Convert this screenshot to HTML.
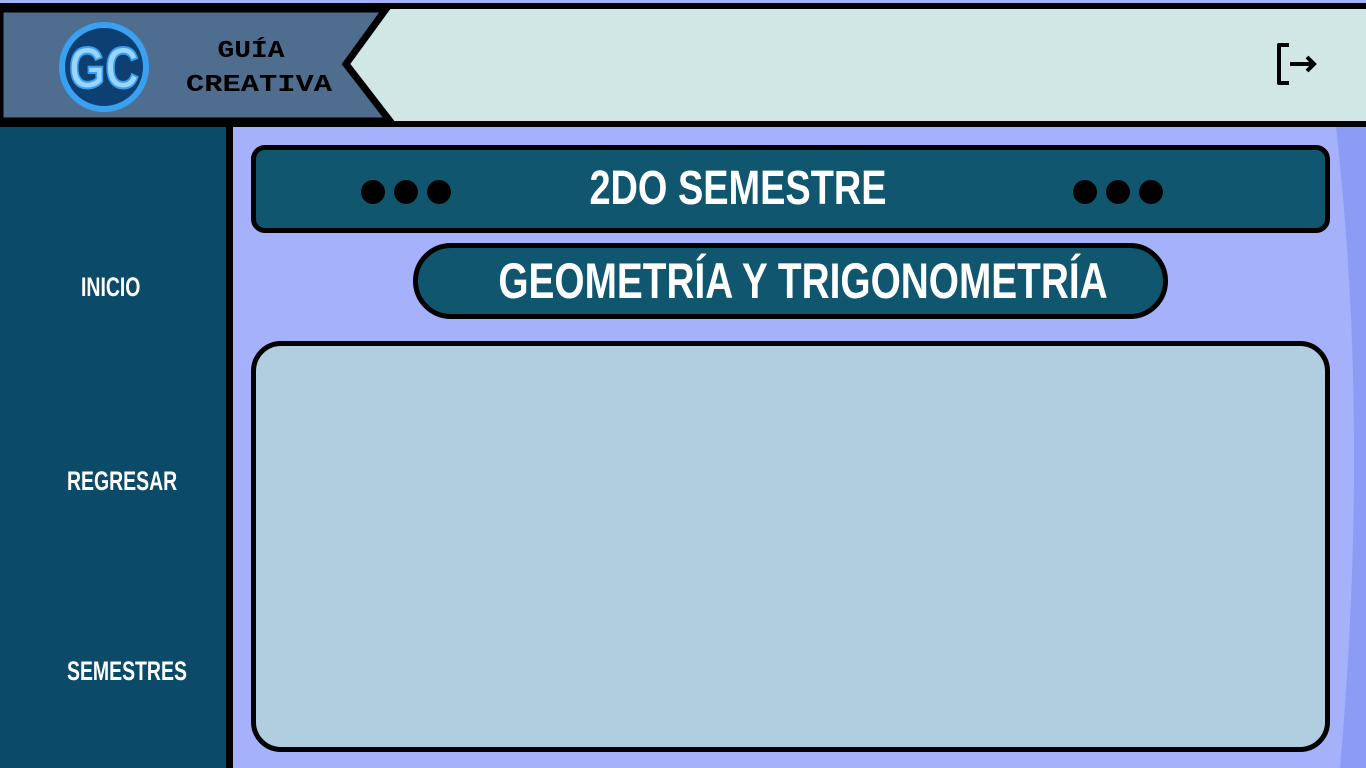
<!DOCTYPE html>
<html><head><meta charset="utf-8"><style>
*{margin:0;padding:0;box-sizing:border-box}
body{width:1366px;height:768px;overflow:hidden;background:#a5b1fa;position:relative;font-family:"Liberation Sans Narrow","Liberation Sans",sans-serif}
.top{position:absolute;left:0;top:0;width:1366px;height:3px;background:#a5b1fa}
.hdr{position:absolute;left:0;top:3px;width:1366px;height:124px;background:#000}
.hdrr{position:absolute;left:0;top:9px;width:1366px;height:112px;background:#d1e7e5}
.side{position:absolute;left:0;top:127px;width:226px;height:641px;background:#0b4a69}
.sideb{position:absolute;left:226px;top:127px;width:7px;height:641px;background:#000}
.nav{position:absolute;color:#fff;font-weight:bold;font-size:27px;transform:scaleX(.72);transform-origin:left;white-space:nowrap}
.bar{position:absolute;background:#10566f;border:5px solid #000;color:#fff;font-weight:bold}
.t{position:absolute;white-space:nowrap}
.dots{position:absolute;top:30px;display:flex;gap:9px}
.dots span{width:24px;height:24px;border-radius:50%;background:#000;display:block}
</style></head><body>
<div class="top"></div>
<div class="hdr"></div>
<div class="hdrr"></div>
<svg style="position:absolute;left:0;top:0" width="420" height="130">
<polygon points="0,9 386,9 346,64 390,121 0,121" fill="#4f6d8f" stroke="#000" stroke-width="7"/>
<circle cx="104" cy="67" r="42" fill="#0e3f73" stroke="#3aa0f0" stroke-width="6"/>
<text x="104" y="88" style="font-family:'Liberation Sans',sans-serif" font-weight="bold" font-size="58" fill="#9ad6ff" stroke="#3aa0f0" stroke-width="2" text-anchor="middle" textLength="70" lengthAdjust="spacingAndGlyphs">GC</text>
<text x="251" y="57" style="font-family:'Liberation Mono',monospace" font-weight="bold" font-size="24" text-anchor="middle" fill="#000" textLength="67" lengthAdjust="spacingAndGlyphs">GUÍA</text>
<text x="259" y="91" style="font-family:'Liberation Mono',monospace" font-weight="bold" font-size="24" text-anchor="middle" fill="#000" textLength="146" lengthAdjust="spacingAndGlyphs">CREATIVA</text>
</svg>
<svg style="position:absolute;left:1270px;top:40px" width="50" height="50">
<path d="M19 5H9V43H19" fill="none" stroke="#000" stroke-width="4" stroke-linejoin="round"/>
<path d="M20 24H44M37 17L44 24L37 31" fill="none" stroke="#000" stroke-width="4"/>
</svg>
<svg style="position:absolute;left:1300px;top:127px" width="66" height="641"><path d="M36 0 Q70 300 40 641 L66 641 L66 0Z" fill="#8c9cf5"/></svg>
<div class="side"></div><div class="sideb"></div>
<div class="nav" style="left:81px;top:272px">INICIO</div>
<div class="nav" style="left:67px;top:466px">REGRESAR</div>
<div class="nav" style="left:67px;top:656px">SEMESTRES</div>
<div class="bar" style="left:251px;top:145px;width:1079px;height:88px;border-radius:14px;font-size:48px;line-height:78px"><div class="t" style="left:482px;top:0;transform:translateX(-50%) scaleX(.79)">2DO SEMESTRE</div>
<div class="dots" style="left:105px"><span></span><span></span><span></span></div>
<div class="dots" style="left:817px"><span></span><span></span><span></span></div></div>
<div class="bar" style="left:413px;top:243px;width:755px;height:76px;border-radius:38px;font-size:50px;line-height:66px"><div class="t" style="left:385px;top:0;transform:translateX(-50%) scaleX(.776)">GEOMETRÍA Y TRIGONOMETRÍA</div></div>
<div style="position:absolute;left:251px;top:341px;width:1079px;height:411px;background:#b1cde0;border:5px solid #000;border-radius:30px"></div>
</body></html>
